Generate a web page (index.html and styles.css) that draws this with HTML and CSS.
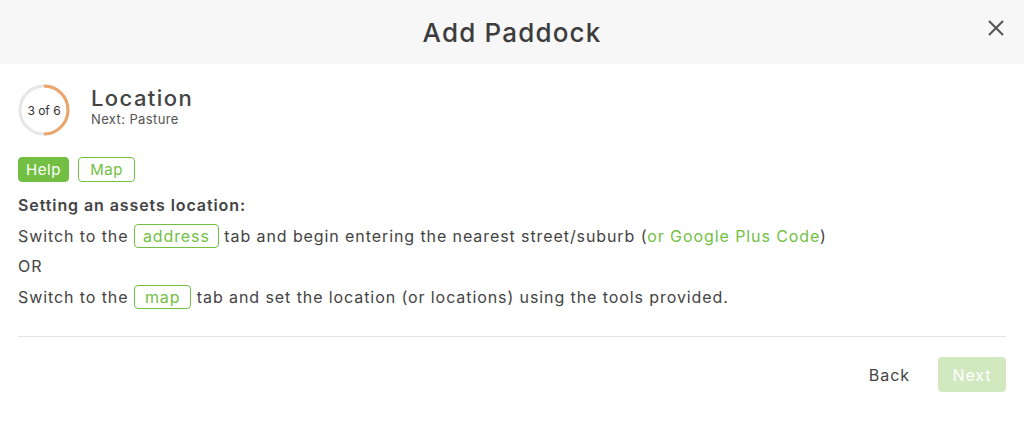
FILE: index.html
```html
<!DOCTYPE html>
<html>
<head>
<meta charset="utf-8">
<link rel="stylesheet" href="styles.css">
</head>
<body>
<div class="modal">
  <header class="modal-header">
    <h1 class="modal-title">Add Paddock</h1>
    <button class="close" aria-label="Close">
      <svg width="16" height="16" viewBox="0 0 16 16"><path d="M1.5 1.5 L14.5 14.5 M14.5 1.5 L1.5 14.5" stroke="#555" stroke-width="2" stroke-linecap="round"/></svg>
    </button>
  </header>
  <div class="modal-body">
    <div class="step">
      <div class="ring">
        <svg width="52" height="52" viewBox="0 0 52 52">
          <circle cx="26" cy="26" r="24" fill="none" stroke="#e6e6e6" stroke-width="3"/>
          <path d="M26 2 A24 24 0 0 1 26 50" fill="none" stroke="#eba46a" stroke-width="3"/>
        </svg>
        <span class="ring-label">3 of 6</span>
      </div>
      <div class="step-text">
        <div class="step-title">Location</div>
        <div class="step-next">Next: Pasture</div>
      </div>
    </div>
    <div class="tabs">
      <span class="tab tab-active">Help</span>
      <span class="tab tab-wide">Map</span>
    </div>
    <div class="help">
      <p class="help-heading">Setting an assets location:</p>
      <p>Switch to the <span class="chip">address</span> tab and begin entering the nearest street/suburb (<span class="green">or Google Plus Code</span>)</p>
      <p>OR</p>
      <p>Switch to the <span class="chip chip-wide">map</span> tab and set the location (or locations) using the tools provided.</p>
    </div>
    <hr class="divider">
    <div class="actions">
      <button class="btn-back">Back</button>
      <button class="btn-next">Next</button>
    </div>
  </div>
</div>
</body>
</html>
```
FILE: styles.css
```css
* { box-sizing: border-box; }
body {
  margin: 0;
  font-family: "Inter", "Open Sans", sans-serif;
  color: #444;
  background: #fff;
}
.modal-header {
  height: 64px;
  background: #f7f7f7;
  display: flex;
  align-items: center;
  justify-content: center;
  position: relative;
}
.modal-title {
  margin: 0;
  font-size: 26px;
  font-weight: 500;
  letter-spacing: 0.045em;
  color: #3d3d3d;
}
.close {
  position: absolute;
  right: 20px;
  top: 20px;
  background: none;
  border: 0;
  padding: 0;
  width: 16px;
  height: 16px;
  cursor: pointer;
}
.close svg { display: block; }
.modal-body {
  padding: 20px 18px 0 18px;
}
.step {
  display: flex;
  align-items: center;
  gap: 21px;
}
.ring {
  position: relative;
  width: 52px;
  height: 52px;
}
.ring svg { display: block; }
.ring-label {
  position: absolute;
  inset: 0;
  display: flex;
  align-items: center;
  justify-content: center;
  font-size: 12px;
  color: #333;
}
.step-text { margin-top: -8px; }
.step-title {
  font-size: 22px;
  font-weight: 500;
  letter-spacing: 0.065em;
  color: #444;
  line-height: 26px;
}
.step-next {
  font-size: 13px;
  letter-spacing: 0.03em;
  color: #555;
  line-height: 16px;
}
.tabs {
  display: flex;
  gap: 9px;
  margin-top: 21px;
}
.tab {
  font-size: 15px;
  letter-spacing: 0.04em;
  line-height: 21px;
  padding: 1px 7px;
  border: 1px solid #72bf44;
  border-radius: 4px;
  color: #72bf44;
}
.tab-wide { padding: 1px 11px; }
.tab-active {
  background: #72bf44;
  color: #fff;
}
.help p {
  margin: 0;
  font-size: 16px;
  letter-spacing: 0.057em;
  line-height: 30.5px;
}
.help { margin-top: 8px; }
.help-heading { font-weight: 600; }
.chip {
  display: inline-block;
  border: 1px solid #72bf44;
  border-radius: 4px;
  color: #72bf44;
  padding: 0 8px;
  line-height: 22px;
}
.chip-wide { padding: 0 10px; }
.green { color: #72bf44; }
.divider {
  border: 0;
  border-top: 1px solid #e6e6e6;
  margin: 24px 0 0 0;
}
.actions {
  display: flex;
  justify-content: flex-end;
  align-items: center;
  gap: 28px;
  margin-top: 20px;
}
.btn-back {
  background: none;
  border: 0;
  font: inherit;
  font-size: 16px;
  letter-spacing: 0.06em;
  color: #444;
  padding: 0;
}
.btn-next {
  font: inherit;
  font-size: 16px;
  letter-spacing: 0.06em;
  background: #d2e9bf;
  color: #fff;
  border: 0;
  border-radius: 4px;
  width: 68px;
  height: 35px;
}
```
